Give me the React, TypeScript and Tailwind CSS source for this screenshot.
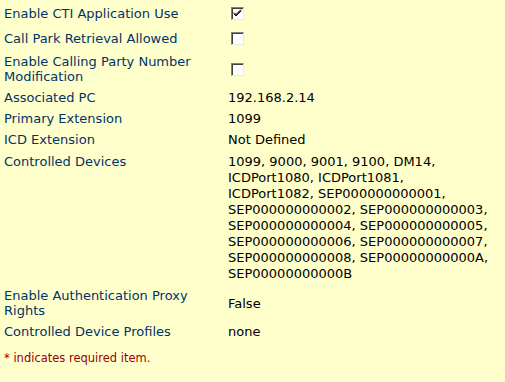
import React from 'react';

const label = 'text-[#003366]';

function Checkbox({ checked }: { checked?: boolean }) {
  return (
    <span className="inline-block w-[13px] h-[13px] bg-white border border-t-[#808080] border-l-[#808080] border-b-[#e8e8e8] border-r-[#e8e8e8] shadow-[inset_1px_1px_0_#404040]">
      {checked && (
        <svg width="11" height="11" viewBox="0 0 11 11" className="block">
          <path d="M2 4.5 L4 6.5 L9 1.5 M2 5.5 L4 7.5 L9 2.5 M2 6 L4 8 L9 3" stroke="#000" strokeWidth="1" fill="none" />
        </svg>
      )}
    </span>
  );
}

const devices = [
  '1099, 9000, 9001, 9100, DM14,',
  'ICDPort1080, ICDPort1081,',
  'ICDPort1082, SEP000000000001,',
  'SEP000000000002, SEP000000000003,',
  'SEP000000000004, SEP000000000005,',
  'SEP000000000006, SEP000000000007,',
  'SEP000000000008, SEP00000000000A,',
  'SEP00000000000B',
];

function Row({ name, children, tall }: { name: React.ReactNode; children: React.ReactNode; tall?: boolean }) {
  return (
    <div className={`grid grid-cols-[228px_1fr] items-center ${tall ? 'min-h-[25px]' : ''}`}>
      <div className={`${label} pl-[4px] py-[3px]`}>{name}</div>
      <div className="py-[3px] text-black">{children}</div>
    </div>
  );
}

export default function App() {
  return (
    <div className="w-[505px] h-[382px] bg-[#ffffcc] overflow-hidden pt-[1px] text-[13px] leading-[15px] font-['DejaVu_Sans',Verdana,sans-serif]">
      <Row name="Enable CTI Application Use" tall>
        <span className="flex pl-[3px]"><Checkbox checked /></span>
      </Row>
      <Row name="Call Park Retrieval Allowed" tall>
        <span className="flex pl-[3px]"><Checkbox /></span>
      </Row>
      <Row name={<>Enable Calling Party Number<br />Modification</>}>
        <span className="flex pl-[3px]"><Checkbox /></span>
      </Row>
      <Row name="Associated PC">192.168.2.14</Row>
      <Row name="Primary Extension">1099</Row>
      <Row name="ICD Extension">Not Defined</Row>
      <div className="grid grid-cols-[228px_1fr] items-start pt-[1px]">
        <div className={`${label} pl-[4px] py-[3px]`}>Controlled Devices</div>
        <div className="py-[3px] whitespace-nowrap leading-[16px]">
          {devices.map((d) => (
            <div key={d}>{d}</div>
          ))}
        </div>
      </div>
      <Row name={<>Enable Authentication Proxy<br />Rights</>}>False</Row>
      <Row name="Controlled Device Profiles">none</Row>
      <div className="pl-[4px] pt-[9px] text-[11.5px] text-[#990000]">* indicates required item.</div>
    </div>
  );
}
